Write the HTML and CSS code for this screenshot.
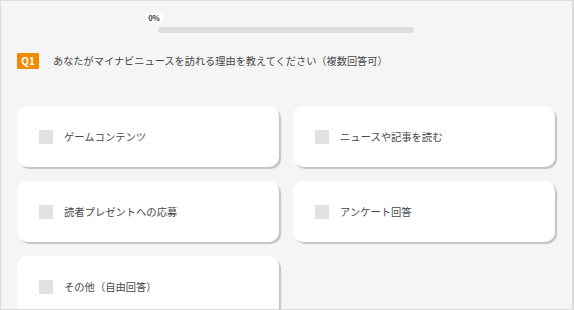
FILE: index.html
```html
<html lang="ja">
  <head>
    <meta charset="UTF-8" />
    <meta name="viewport" content="width=device-width, initial-scale=1.0" />
    <title>アンケート</title>

    <link rel="stylesheet" href="styles.css">
  </head>
  <body>
    <div class="page">
      <div class="progress">
        <div class="progress-label">0%</div>
        <div class="progress-bar"></div>
      </div>

      <div class="question">
        <span class="q-badge">Q1</span>
        <span class="q-text">あなたがマイナビニュースを訪れる理由を教えてください（複数回答可）</span>
      </div>

      <div class="options">
        <label class="option"><span class="check"></span>ゲームコンテンツ</label>
        <label class="option"><span class="check"></span>ニュースや記事を読む</label>
        <label class="option"><span class="check"></span>読者プレゼントへの応募</label>
        <label class="option"><span class="check"></span>アンケート回答</label>
        <label class="option"><span class="check"></span>その他（自由回答）</label>
      </div>
    </div>
  </body>
</html>
```

FILE: styles.css
```css
*,
*::after,
*::before {
  margin: 0;
  padding: 0;
  box-sizing: border-box;
}

:root {
  --bg: #f5f5f5;
  --border: #dcdcdc;
  --text: #484848;
  --accent: #f08a00;
  --check: #e2e2e2;
  --font: "Noto Sans CJK JP", "Noto Sans", sans-serif;
}

body {
  width: 574px;
  height: 310px;
  overflow: hidden;
  font-family: var(--font);
  color: var(--text);
}

.page {
  height: 310px;
  background: var(--bg);
  border: 1px solid var(--border);
  border-right-width: 2px;
  overflow: hidden;
}

.progress {
  position: relative;
  margin: 26px 0 0 157px;
  width: 256px;
}

.progress-bar {
  height: 6px;
  border-radius: 3px;
  background: #dedede;
}

.progress-label {
  position: absolute;
  left: -13px;
  top: -14px;
  width: 18px;
  height: 9px;
  background: #fff;
  font-size: 7.5px;
  font-weight: 700;
  line-height: 9px;
  text-align: center;
  color: #333;
}

.progress-label::after {
  content: "";
  position: absolute;
  left: 6px;
  top: 9px;
  border: 3px solid transparent;
  border-top-color: #fff;
}

.question {
  display: flex;
  align-items: center;
  margin: 20px 0 0 16px;
}

.q-badge {
  width: 22px;
  height: 16px;
  background: var(--accent);
  color: #fff;
  font-size: 10px;
  font-weight: 700;
  line-height: 16px;
  text-align: center;
  border-radius: 1px;
}

.q-text {
  margin-left: 14px;
  font-size: 10.2px;
  line-height: 16px;
}

.options {
  display: grid;
  grid-template-columns: 262px 262px;
  column-gap: 14px;
  row-gap: 14px;
  margin: 37px 0 0 16px;
}

.option {
  display: flex;
  align-items: center;
  height: 61px;
  padding-left: 22px;
  background: #fff;
  border-radius: 10px;
  box-shadow: 2px 2px 1px rgba(0, 0, 0, 0.2);
  font-size: 10.3px;
  cursor: pointer;
}

.check {
  width: 14px;
  height: 14px;
  margin-right: 11px;
  background: var(--check);
}
```
